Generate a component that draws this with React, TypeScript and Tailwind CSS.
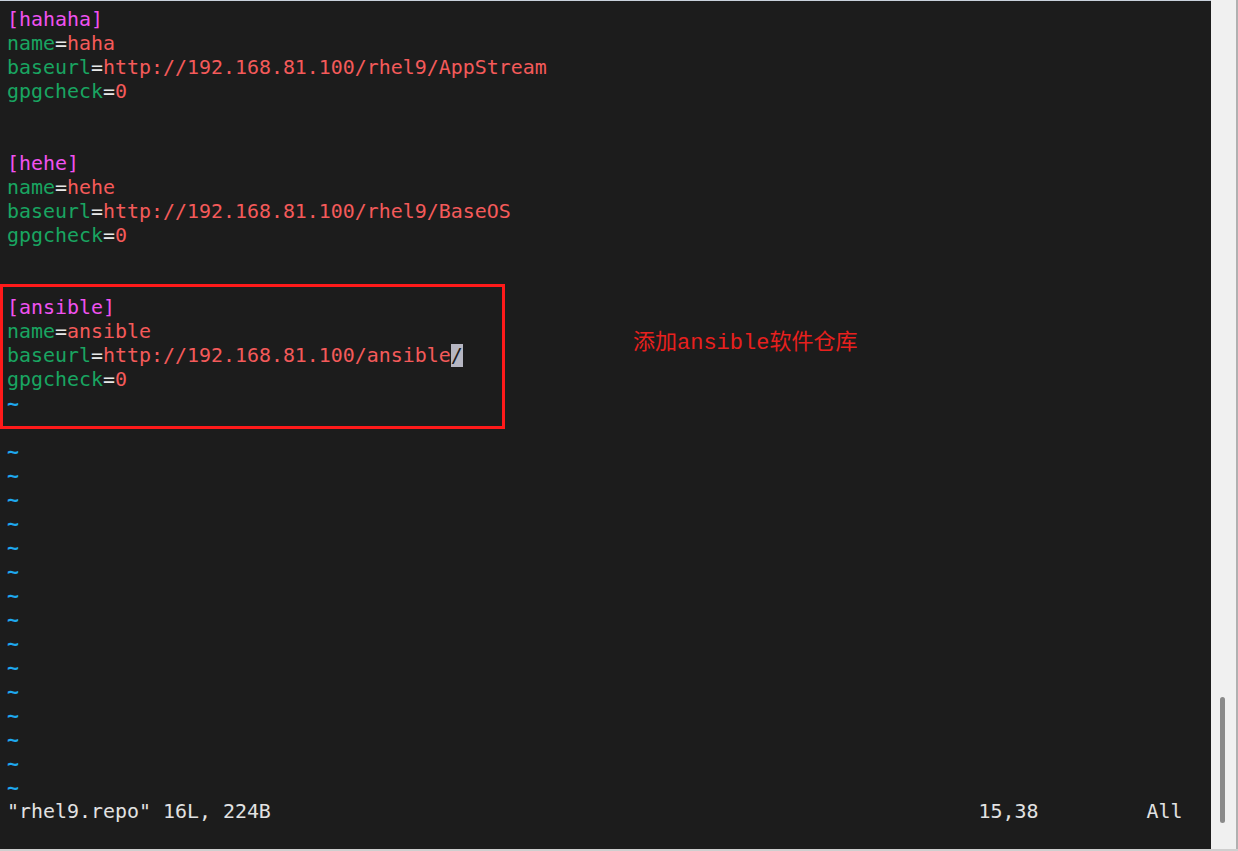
const mono = { fontFamily: '"DejaVu Sans Mono", "Liberation Mono", monospace' }

type Seg = { t: string; c: string }

const KEY = 'text-[#19a561]'
const VAL = 'text-[#f45a5a]'
const EQ = 'text-[#e8e8e8]'
const SEC = 'text-[#f052f0]'

const kv = (k: string, v: string): Seg[] => [
  { t: k, c: KEY },
  { t: '=', c: EQ },
  { t: v, c: VAL },
]

const lines: Seg[][] = [
  [{ t: '[hahaha]', c: SEC }],
  kv('name', 'haha'),
  kv('baseurl', 'http://192.168.81.100/rhel9/AppStream'),
  kv('gpgcheck', '0'),
  [],
  [],
  [{ t: '[hehe]', c: SEC }],
  kv('name', 'hehe'),
  kv('baseurl', 'http://192.168.81.100/rhel9/BaseOS'),
  kv('gpgcheck', '0'),
  [],
  [],
  [{ t: '[ansible]', c: SEC }],
  kv('name', 'ansible'),
  [
    { t: 'baseurl', c: KEY },
    { t: '=', c: EQ },
    { t: 'http://192.168.81.100/ansible', c: VAL },
    { t: '/', c: 'cursor' },
  ],
  kv('gpgcheck', '0'),
]

// the second tilde sits under the annotation box's bottom edge
const tildes = Array.from({ length: 17 }, (_, i) => i)

export default function App() {
  return (
    <div className="flex w-[1238px] h-[851px] bg-[#cfcfcf] overflow-hidden">
      <div className="relative flex-1 flex flex-col h-[849px] bg-[#1c1c1c] border-t border-[#c9d1dc]">
        <div className="flex flex-col pl-[7px] pt-[7px] text-[19.93px] leading-[24px] whitespace-pre" style={mono}>
          {lines.map((segs, i) => (
            <div key={i} className="h-[24px]">
              {segs.map((s, j) =>
                s.c === 'cursor' ? (
                  <span key={j} className="bg-[#b6b6c2] text-[#1c1c1c]">
                    {s.t}
                  </span>
                ) : (
                  <span key={j} className={s.c}>
                    {s.t}
                  </span>
                ),
              )}
            </div>
          ))}
          {tildes.map((i) => (
            <div key={'t' + i} className="h-[24px] font-bold text-[#1ea8ee]">
              {i === 1 ? '' : '~'}
            </div>
          ))}
          <div className="h-[24px] text-[#e2e2e2]">
            {'"rhel9.repo" 16L, 224B' + ' '.repeat(59) + '15,38' + ' '.repeat(9) + 'All'}
          </div>
        </div>

        {/* annotation box */}
        <div className="absolute left-0 top-[283px] w-[505px] h-[145px] border-[3px] border-[#ff1a1a]" />
        <div
          className="absolute left-[633px] top-[329px] text-[22px] leading-[28px] text-[#e8201e] whitespace-nowrap"
          style={{ fontFamily: '"Liberation Mono", "Noto Sans CJK SC", monospace' }}
        >
          添加ansible软件仓库
        </div>
      </div>

      {/* scrollbar */}
      <div className="w-[27px] h-[849px] bg-[#f0f0f0] border-r-2 border-[#b0b0b0] flex flex-col items-center justify-end pb-[26px]">
        <div className="w-[5px] h-[126px] rounded-full bg-[#8a8a8a] mr-[3px]" />
      </div>
    </div>
  )
}
